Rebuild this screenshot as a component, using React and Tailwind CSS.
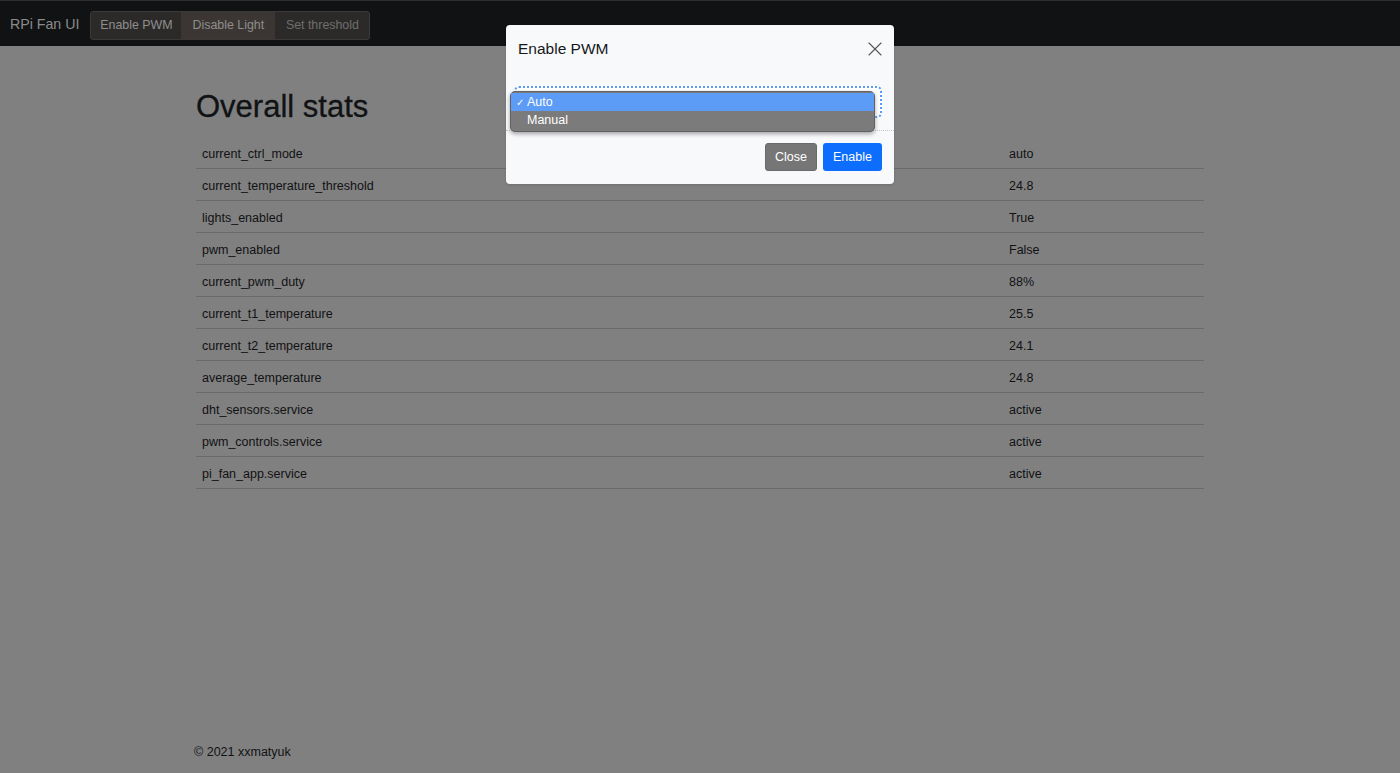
import { X } from "lucide-react";

const stats = [
  ["current_ctrl_mode", "auto"],
  ["current_temperature_threshold", "24.8"],
  ["lights_enabled", "True"],
  ["pwm_enabled", "False"],
  ["current_pwm_duty", "88%"],
  ["current_t1_temperature", "25.5"],
  ["current_t2_temperature", "24.1"],
  ["average_temperature", "24.8"],
  ["dht_sensors.service", "active"],
  ["pwm_controls.service", "active"],
  ["pi_fan_app.service", "active"],
];

const App = () => {
  return (
    <div className="relative h-[773px] flex flex-col bg-[#808080] font-['Liberation_Sans',Arial,sans-serif] text-[#111214] overflow-hidden">
      {/* NAVBAR (dimmed by backdrop) */}
      <nav className="h-[46px] shrink-0 bg-[#111214] border-t border-[#2f2f30] flex items-center pl-[10px] pt-[3px]">
        <span className="text-[14.2px] text-[#8b8b8b] mr-[11px]">RPi Fan UI</span>
        <div className="flex h-[29px] rounded-[3px] border border-[#3a3938] bg-[#2c2a29] text-[12.4px]">
          <button className="w-[90px] text-[#8e8e8e]">Enable PWM</button>
          <button className="w-[94px] bg-[#3b3633] text-[#8e8e8e]">Disable Light</button>
          <button className="w-[94px] text-[#6e6e6e]">Set threshold</button>
        </div>
      </nav>

      {/* MAIN */}
      <main className="flex-1">
        <div className="w-[1008px] mx-auto pt-[43px]">
          <h2 className="text-[31px] leading-[36px] mb-[12px] [-webkit-text-stroke:0.3px_#111214]">Overall stats</h2>
          <table className="w-full text-[12.5px]">
            <tbody>
              {stats.map(([key, value]) => (
                <tr key={key} className="border-b border-[#6b6b6b]">
                  <td className="pt-[8px] pb-[5px] leading-[18px] px-[6px] w-[807px]">{key}</td>
                  <td className="pt-[8px] pb-[5px] leading-[18px] px-[6px]">{value}</td>
                </tr>
              ))}
            </tbody>
          </table>
        </div>
      </main>

      {/* FOOTER */}
      <footer className="w-[1012px] mx-auto pb-[11px] text-[12.5px] leading-[20px]">
        © 2021 xxmatyuk
      </footer>

      {/* MODAL */}
      <div className="absolute inset-0 pt-[25px]">
        <div className="w-[388px] mx-auto bg-[#f8f9fb] rounded-[4px] shadow-sm">
          <div className="h-[48px] px-[12px] flex items-center justify-between">
            <h5 className="text-[15.5px] text-[#16181a]">Enable PWM</h5>
            <X size={24} strokeWidth={1.1} className="text-[#555] mr-[-5px]" />
          </div>

          <div className="px-[8px] pt-[13px] pb-[12px]">
            <div className="relative mr-[4px] h-[32px] rounded-[5px] border-2 border-dotted border-[#5b9af5] bg-white">
              {/* native select popup */}
              <div className="absolute left-[-6px] top-[3px] right-[5px] rounded-[5px] bg-[#7b7b7b] border border-[#626262] shadow-[0_2px_4px_rgba(0,0,0,0.35)] py-[1px] text-[12.5px] text-white">
                <div className="h-[18px] flex items-center bg-[#5c9bf6] pl-[5px]">
                  <span className="w-[11px] text-[10px]">✓</span>
                  <span>Auto</span>
                </div>
                <div className="h-[19px] flex items-center pl-[16px]">Manual</div>
              </div>
            </div>
          </div>

          <div className="border-t border-dotted border-[#c8c8c8] px-[12px] pt-[12px] pb-[13px] flex justify-end gap-[6px]">
            <button className="h-[28px] w-[52px] rounded-[3px] bg-[#767676] border border-[#6a6a6a] text-white text-[12.5px]">
              Close
            </button>
            <button className="h-[28px] w-[59px] rounded-[3px] bg-[#0d6efd] text-white text-[12.5px]">
              Enable
            </button>
          </div>
        </div>
      </div>
    </div>
  );
};

export default App;
